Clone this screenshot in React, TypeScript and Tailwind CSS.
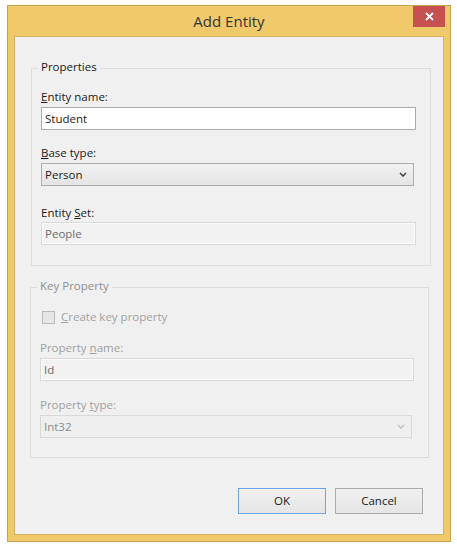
import type { ReactNode } from 'react';

const FONT = "font-['Open_Sans','Noto_Sans',sans-serif]";

function Label({ children, disabled = false, className = '' }: { children: ReactNode; disabled?: boolean; className?: string }) {
  return (
    <div className={`text-[11.5px] leading-[16px] ${disabled ? 'text-[#a2a2a2]' : 'text-[#1b1b1b]'} ${className}`}>
      {children}
    </div>
  );
}

function TextBox({ value, disabled = false, className = '' }: { value: string; disabled?: boolean; className?: string }) {
  return (
    <div
      className={`flex h-[23px] items-center border px-[3px] text-[11.5px] ${
        disabled
          ? 'border-[#d9d9d9] bg-[#f2f2f2] text-[#6d6d6d] shadow-[inset_0_0_0_1px_#fbfbfb]'
          : 'border-[#abadb3] bg-white text-[#1b1b1b]'
      } ${className}`}
    >
      {value}
    </div>
  );
}

function Chevron({ color }: { color: string }) {
  return (
    <svg width="8" height="5" viewBox="0 0 8 5" aria-hidden>
      <path d="M1 1l3 3 3-3" fill="none" stroke={color} strokeWidth={1.5} />
    </svg>
  );
}

function ComboBox({ value, disabled = false, className = '' }: { value: string; disabled?: boolean; className?: string }) {
  return (
    <div
      className={`flex h-[23px] items-center justify-between border pl-[3px] pr-[6px] text-[11.5px] ${
        disabled
          ? 'border-[#d9d9d9] bg-[#efefef] text-[#8a8a8a]'
          : 'border-[#acacac] bg-gradient-to-b from-[#f2f2f2] to-[#e4e4e4] text-[#1b1b1b]'
      } ${className}`}
    >
      <span>{value}</span>
      <Chevron color={disabled ? '#c2c2c2' : '#404040'} />
    </div>
  );
}

function Button({ children, isDefault = false }: { children: ReactNode; isDefault?: boolean }) {
  return (
    <button
      type="button"
      className={`h-[26px] w-[88px] border bg-gradient-to-b from-[#f0f0f0] to-[#e5e5e5] text-[11.5px] text-[#1b1b1b] ${
        isDefault ? 'border-[#6aa6e6]' : 'border-[#acacac]'
      }`}
    >
      {children}
    </button>
  );
}

export default function App() {
  return (
    <div className={`min-h-screen bg-white pl-[7px] pt-[5px] ${FONT}`}>
      <div className="flex h-[537px] w-[444px] flex-col border border-[#c8a350] bg-[#f0c96b] px-[6px] pb-[6px]">
        {/* title bar */}
        <div className="grid h-[30px] shrink-0 grid-cols-[1fr_auto_1fr]">
          <div />
          <div className="pt-[5px] text-[15px] leading-[20px] text-[#353535]">Add Entity</div>
          <div className="flex justify-end">
            <button
              type="button"
              aria-label="Close"
              className="flex h-[21px] w-[32px] items-center justify-center bg-[#c75050] -mr-[1px]"
            >
              <svg width="9" height="9" viewBox="0 0 9 9" aria-hidden>
                <path d="M1 1l7 7M8 1l-7 7" stroke="white" strokeWidth={1.8} />
              </svg>
            </button>
          </div>
        </div>

        {/* client area */}
        <div className="flex-1 border border-[#d5b364] bg-[#f0f0f0]">
          <fieldset className="ml-[16px] mr-[12px] mt-[22px] border border-[#dcdcdc] px-[9px] pb-[20px]">
            <legend className="-ml-[3px] px-[3px] pb-[3px] text-[11.5px] leading-[16px] text-[#1b1b1b]">Properties</legend>
            <Label className="mt-[11px]">
              <u>E</u>ntity name:
            </Label>
            <TextBox value="Student" className="mt-[2px] mr-[5px]" />
            <Label className="mt-[15px]">
              <u>B</u>ase type:
            </Label>
            <ComboBox value="Person" className="mt-[2px] mr-[7px]" />
            <Label className="mt-[19px]">
              Entity <u>S</u>et:
            </Label>
            <TextBox value="People" disabled className="mt-[1px] mr-[5px]" />
          </fieldset>

          <fieldset className="ml-[15px] mr-[14px] mt-[12px] border border-[#dcdcdc] px-[9px] pb-[19px]">
            <legend className="-ml-[3px] px-[3px] pb-[3px] text-[11.5px] leading-[16px] text-[#8f8f8f]">Key Property</legend>
            <div className="mt-[12px] flex items-center gap-[6px] text-[11.5px] leading-[16px] text-[#a2a2a2]">
              <span className="ml-[2px] h-[13px] w-[13px] border border-[#bcbcbc] bg-[#e6e6e6]" />
              <span>
                <u>C</u>reate key property
              </span>
            </div>
            <Label disabled className="mt-[15px]">
              Property <u>n</u>ame:
            </Label>
            <TextBox value="Id" disabled className="mt-[2px] mr-[5px]" />
            <Label disabled className="mt-[16px]">
              Property <u>t</u>ype:
            </Label>
            <ComboBox value="Int32" disabled className="mt-[2px] mr-[7px]" />
          </fieldset>

          <div className="mr-[20px] mt-[30px] flex justify-end gap-[9px]">
            <Button isDefault>OK</Button>
            <Button>Cancel</Button>
          </div>
        </div>
      </div>
    </div>
  );
}
